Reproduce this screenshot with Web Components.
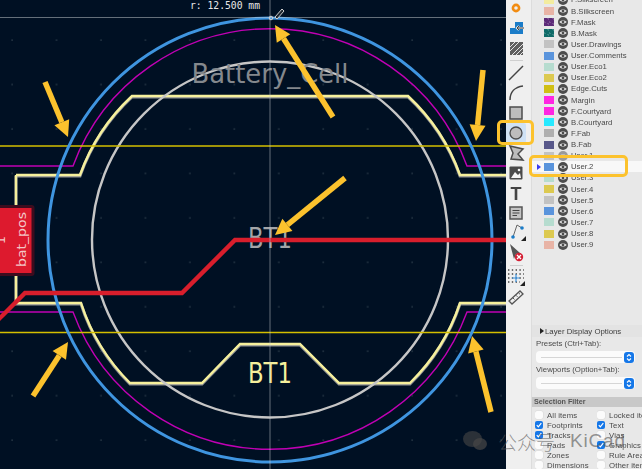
<!DOCTYPE html>
<html>
<head>
<meta charset="utf-8">
<title>KiCad footprint editor</title>
<style>
  html, body { margin: 0; padding: 0; background: #001023; }
</style>
</head>
<body>
<kicad-app>
  <pcb-canvas slot="canvas"></pcb-canvas>
  <tool-bar slot="tools"></tool-bar>
  <side-panel slot="panel"></side-panel>
  <call-arrow x1="333" y1="117" x2="275" y2="25"></call-arrow>
  <call-arrow x1="45" y1="82" x2="68" y2="137"></call-arrow>
  <call-arrow x1="483" y1="70" x2="476" y2="141"></call-arrow>
  <call-arrow x1="345" y1="178" x2="275" y2="235"></call-arrow>
  <call-arrow x1="33" y1="396" x2="68" y2="342"></call-arrow>
  <call-arrow x1="491" y1="412" x2="472" y2="336"></call-arrow>
  <call-box style="left:497px;top:120px;width:31px;height:19px"></call-box>
  <call-box style="left:529px;top:155px;width:93px;height:16px"></call-box>
  <water-mark></water-mark>
</kicad-app>

<script>
const GOLD = '#fcc22d';

class KicadApp extends HTMLElement {
  constructor() {
    super();
    this.attachShadow({ mode: 'open' });
    this.shadowRoot.innerHTML = `
      <style>
        :host {
          position: relative;
          display: grid;
          grid-template-columns: 506px 26px 110px;
          width: 642px;
          height: 469px;
          overflow: hidden;
          font-family: "Liberation Sans", Arial, sans-serif;
        }
      </style>
      <slot name="canvas"></slot>
      <slot name="tools"></slot>
      <slot name="panel"></slot>
      <slot></slot>
    `;
  }
}

class PcbCanvas extends HTMLElement {
  constructor() {
    super();
    this.attachShadow({ mode: 'open' });
    const silk = `M16 175H80A200 200 0 0 1 132 96H408A200 200 0 0 1 460 175H506
      M16 175V303H81A200 200 0 0 0 130 383H202L240 344H300L339 383H410A200 200 0 0 0 460 303H506`;
    this.shadowRoot.innerHTML = `
      <style>
        :host { display: block; width: 506px; height: 469px; background: #001023; overflow: hidden; }
        svg { display: block; }
        text { font-family: "DejaVu Sans", sans-serif; }
        .hud { font-family: "DejaVu Sans Mono", monospace; font-size: 9.7px; fill: #e8e8e8; }
      </style>
      <svg width="506" height="469" viewBox="0 0 506 469">
        <defs>
          <pattern id="grid" x="11" y="39" width="44.45" height="44.45" patternUnits="userSpaceOnUse">
            <rect x="0.5" y="0.5" width="1.2" height="1.2" fill="#3d4c58"></rect>
          </pattern>
        </defs>
        <rect width="506" height="469" fill="url(#grid)"></rect>

        <path d="${silk}" transform="translate(0 1)" fill="none" stroke="#8f9296" stroke-width="3"></path>
        <path d="${silk}" fill="none" stroke="#f6f09c" stroke-width="2.4"></path>

        <path d="M0 166H73A210 210 0 0 1 467 166H506M0 312H73A210 210 0 0 0 467 312H506"
          fill="none" stroke="#c000b4" stroke-width="1.4"></path>
        <circle cx="270" cy="239.5" r="178" fill="none" stroke="#c6c6c6" stroke-width="2.4"></circle>

        <text x="270" y="83" font-size="27" text-anchor="middle" textLength="157" lengthAdjust="spacingAndGlyphs" fill="#84888d">Battery_Cell</text>
        <text x="270" y="248" font-size="28" text-anchor="middle" textLength="44" lengthAdjust="spacingAndGlyphs" fill="#a3a5a8">BT1</text>
        <text x="270" y="383" font-size="28" text-anchor="middle" textLength="44" lengthAdjust="spacingAndGlyphs" fill="#f6f09c">BT1</text>

        <path d="M0 146H506M0 332.5H506" stroke="#d4bf00" stroke-width="1.6"></path>
        <circle cx="270" cy="240" r="222" fill="none" stroke="#3f95e0" stroke-width="3"></circle>

        <path d="M-6 324L25 293H182L235 240H506" fill="none" stroke="#d81e2c" stroke-width="4.4"></path>

        <rect x="-6" y="205" width="40.5" height="71" rx="3" fill="#3c0c1e"></rect>
        <rect x="-6" y="208" width="37.5" height="65" fill="#dd1a2e"></rect>
        <text transform="translate(26 267) rotate(-90)" font-size="12.4" fill="#f3c6c8" textLength="55" lengthAdjust="spacingAndGlyphs">bat_pos</text>
        <text transform="translate(5 244) rotate(-90)" font-size="12.4" fill="#f3c6c8">1</text>

        <path d="M270 0V469M0 17.5H506" stroke="#c8cdd2" stroke-opacity=".5" stroke-width="1"></path>
        <circle cx="271" cy="18" r="1.8" fill="none" stroke="#cfd2d6" stroke-width="1"></circle>
        <path d="M275 17L282 9L284 11L277 19Z" fill="#1d2630" stroke="#d0d0d0" stroke-width="1"></path>
        <text class="hud" x="190" y="9">r: 12.500 mm</text>
      </svg>
    `;
  }
}

const TOOL_ICONS = {
  ring: `<circle cx="10" cy="10" r="3.1" fill="none" stroke="#f28c12" stroke-width="2.6"></circle>`,
  footprint: `<path d="M4 16V10H9V4H17V16Z" fill="#1b7cc8"></path><path d="M18 10H11M13 8L11 10L13 12" stroke="#e8e8e8" stroke-width="2.2" fill="none"></path><path d="M18 10H11M13 8L11 10L13 12" stroke="#444" stroke-width="1" fill="none"></path>`,
  hatch: `<rect x="4" y="4" width="13" height="13" fill="#5f5f5f"></rect><path d="M4 9L9 4M4 13L13 4M6 17L17 6M10 17L17 10M14 17L17 14" stroke="#e4e4e4" stroke-width="1"></path>`,
  line: `<path d="M3 17L17 3" stroke="#444" stroke-width="1.5"></path>`,
  arc: `<path d="M4 17C4 9 9 4 17 3" fill="none" stroke="#444" stroke-width="1.5"></path>`,
  rect: `<rect x="4" y="4" width="12" height="12" fill="#bdbdbd" stroke="#4c4c4c" stroke-width="1.5"></rect>`,
  circle: `<circle cx="10" cy="10" r="6" fill="#bdbdbd" stroke="#4c4c4c" stroke-width="1.3"></circle>`,
  polygon: `<path d="M4 3L17 6L12 11L17 17L5 16L7 10Z" fill="#bdbdbd" stroke="#4c4c4c" stroke-width="1.5"></path>`,
  image: `<rect x="3.5" y="3.5" width="13" height="13" rx="1" fill="#4a4a4a"></rect><path d="M5 15L9 9L12 12L14 10L15 15Z" fill="#f4f4f4"></path><circle cx="13" cy="7" r="1.3" fill="#f4f4f4"></circle>`,
  text: `<text x="10" y="17" font-size="18" font-weight="bold" font-family="Liberation Sans, sans-serif" text-anchor="middle" fill="#444">T</text>`,
  textbox: `<rect x="4" y="4" width="12" height="12" fill="#c4c4c4" stroke="#555" stroke-width="1.5"></rect><path d="M6.5 7.5H13.5M6.5 10H13.5M6.5 12.5H11" stroke="#444"></path>`,
  node: `<path d="M7 14L11 2L16 5" fill="none" stroke="#666" stroke-width="1"></path><circle cx="7" cy="14" r="1.8" fill="#1b7cc8"></circle><circle cx="16" cy="5" r="1.8" fill="#1b7cc8"></circle><path d="M20 13V18H15Z" fill="#222"></path>`,
  cursor: `<path d="M4 1L14 10L10 11L8 16Z" fill="#555"></path><circle cx="13" cy="14" r="4.2" fill="#d41f34"></circle><path d="M11 12L15 16M15 12L11 16" stroke="#fff" stroke-width="1.3"></path>`,
  grid: `<path d="M2 3H18M2 7H18M2 11H18M2 15H14" stroke="#444" stroke-width="1.4" stroke-dasharray="1.4 2.4"></path><path d="M6 11H14M10 7V15" stroke="#3f95e0" stroke-width="1.2"></path><path d="M19 14V19H14Z" fill="#222"></path>`,
  ruler: `<path d="M3 14L14 4L17 7L6 17Z" fill="#f0f0f0" stroke="#555" stroke-width="1.3"></path><path d="M7 11L8.5 12.5M10 8.3L11.5 9.8M12.7 6L14 7.3" stroke="#555"></path>`
};

class ToolButton extends HTMLElement {
  constructor() {
    super();
    this.attachShadow({ mode: 'open' });
  }

  connectedCallback() {
    this.shadowRoot.innerHTML = `
      <style>
        :host { display: block; width: 20px; height: 20px; flex: none; }
        :host([active]) .face { background: #cfe2f5; border-radius: 2px; }
        .face { width: 20px; height: 20px; }
        svg { display: block; }
      </style>
      <div class="face">
        <svg width="20" height="20" viewBox="0 0 20 20">${TOOL_ICONS[this.getAttribute('icon')]}</svg>
      </div>
    `;
  }
}

class ToolBar extends HTMLElement {
  constructor() {
    super();
    this.attachShadow({ mode: 'open' });
    const btn = (name, extra = '') => `<tool-button icon="${name}" ${extra}></tool-button>`;
    this.shadowRoot.innerHTML = `
      <style>
        :host {
          display: flex;
          flex-direction: column;
          width: 26px;
          height: 469px;
          background: #efefef;
          box-sizing: border-box;
          border-right: 1px solid #dcdcdc;
          filter: blur(.35px);
          overflow: hidden;
        }
        .top { margin-top: -2px; }
        hr { flex: none; width: 13px; height: 1px; margin: 2px 0 2px 4px; border: 0; background: #cfcfcf; }
        hr.last { margin: 1.5px 0 1.5px 4px; }
      </style>
      <div class="top"></div>
      ${btn('ring')}${btn('footprint')}${btn('hatch')}
      <hr>
      ${btn('line')}${btn('arc')}${btn('rect')}${btn('circle', 'active')}${btn('polygon')}
      ${btn('image')}${btn('text')}${btn('textbox')}${btn('node')}${btn('cursor')}
      <hr class="last">
      ${btn('grid')}${btn('ruler')}
    `;
  }
}

class LayerRow extends HTMLElement {
  constructor() {
    super();
    this.attachShadow({ mode: 'open' });
  }

  connectedCallback() {
    const color = this.getAttribute('color');
    const hatch = this.hasAttribute('hatch')
      ? `background-image: linear-gradient(45deg, rgba(255,255,255,.18) 25%, transparent 25%, transparent 75%, rgba(255,255,255,.18) 75%); background-size: 5px 5px;`
      : '';
    const eye = this.hasAttribute('dim') ? '#9a9a9a' : '#4d4d4d';
    this.shadowRoot.innerHTML = `
      <style>
        :host { display: flex; align-items: center; height: 11.13px; font-size: 7.75px; color: #4a4a4a; white-space: nowrap; }
        :host([selected]) { background: #f8f8f8; }
        .arrow { width: 12px; flex: none; padding-left: 5px; box-sizing: border-box; }
        .arrow i { display: none; width: 0; height: 0; border-left: 4px solid #3b3bf0; border-top: 3.5px solid transparent; border-bottom: 3.5px solid transparent; }
        :host([selected]) .arrow i { display: block; }
        .swatch { width: 10px; height: 8px; flex: none; margin-right: 4px; background-color: ${color}; ${hatch} }
        svg { flex: none; margin-right: 3px; display: block; }
      </style>
      <span class="arrow"><i></i></span>
      <span class="swatch"></span>
      <svg width="10" height="10" viewBox="0 0 10 10">
        <circle cx="5" cy="5" r="5" fill="${eye}"></circle>
        <path d="M1.2 5Q5 1.6 8.8 5Q5 8.4 1.2 5Z" fill="#ededed"></path>
        <circle cx="5" cy="5" r="1.4" fill="${eye}"></circle>
      </svg>
      <slot></slot>
    `;
  }
}

class SelectBox extends HTMLElement {
  constructor() {
    super();
    this.attachShadow({ mode: 'open' });
    this.shadowRoot.innerHTML = `
      <style>
        :host { display: flex; flex: none; align-items: center; width: 99px; height: 12px; margin-left: 4px; border-radius: 4px; background: #fbfbfb; box-sizing: border-box; padding-left: 5px; }
        .rule { flex: 1; height: 1px; background: #d6d6d6; margin-right: 2px; }
        .step { width: 10px; height: 11px; border-radius: 3px; background: #1577e8; flex: none; margin-right: 1px; display: block; }
      </style>
      <div class="rule"></div>
      <svg class="step" viewBox="0 0 10 11"><path d="M3 4.5L5 2.5L7 4.5M3 6.5L5 8.5L7 6.5" fill="none" stroke="#fff" stroke-width="1.1"></path></svg>
    `;
  }
}

class CheckRow extends HTMLElement {
  constructor() {
    super();
    this.attachShadow({ mode: 'open' });
    this.shadowRoot.innerHTML = `
      <style>
        :host { display: flex; align-items: center; height: 10px; font-size: 7.8px; color: #4a4a4a; letter-spacing: .1px; white-space: nowrap; min-width: 0; }
        .box { width: 8px; height: 8px; flex: none; margin-right: 4px; border-radius: 2px; background: #fbfbfb; box-shadow: 0 0 0 .5px #d8d8d8; display: block; }
        :host([checked]) .box { background: #1577e8; box-shadow: none; }
        .box path { display: none; }
        :host([checked]) .box path { display: block; }
      </style>
      <svg class="box" viewBox="0 0 8 8"><path d="M1.8 4.2L3.3 5.8L6.3 2.2" fill="none" stroke="#fff" stroke-width="1.2"></path></svg>
      <slot></slot>
    `;
  }
}

class SidePanel extends HTMLElement {
  constructor() {
    super();
    this.attachShadow({ mode: 'open' });
    const layers = [
      ['F.Silkscreen', '#f3ec9f'], ['B.Silkscreen', '#e8b4a6'], ['F.Mask', '#5c2a78', 'hatch'], ['B.Mask', '#0f6b68', 'hatch'],
      ['User.Drawings', '#c2c2c2'], ['User.Comments', '#5a94dc'], ['User.Eco1', '#b6dccf'], ['User.Eco2', '#dcc950'],
      ['Edge.Cuts', '#d0bf14'], ['Margin', '#ff26e2'], ['F.Courtyard', '#ff26e2'], ['B.Courtyard', '#26e9ff'],
      ['F.Fab', '#afafaf'], ['B.Fab', '#58588a'], ['User.1', '#c2c2c2', 'dim'], ['User.2', '#5a94dc', 'selected'],
      ['User.3', '#b6dccf'], ['User.4', '#dcc950'], ['User.5', '#c2c2c2'], ['User.6', '#5a94dc'],
      ['User.7', '#b6dccf'], ['User.8', '#dcc950'], ['User.9', '#e8b4a6']
    ];
    const rows = layers.map(([name, color, flag = '']) =>
      `<layer-row color="${color}" ${flag}>${name}</layer-row>`).join('');
    const checks = [
      ['All items', ''], ['Locked items', ''], ['Footprints', 'checked'], ['Text', 'checked'],
      ['Tracks', 'checked'], ['Vias', ''], ['Pads', ''], ['Graphics', 'checked'],
      ['Zones', ''], ['Rule Areas', ''], ['Dimensions', ''], ['Other items', '']
    ].map(([name, flag]) => `<check-row ${flag}>${name}</check-row>`).join('');
    this.shadowRoot.innerHTML = `
      <style>
        :host {
          display: flex;
          flex-direction: column;
          width: 110px;
          height: 469px;
          overflow: hidden;
          background: #e8e8e8;
          filter: blur(.35px);
        }
        .layers { margin-top: -5.6px; height: 331px; flex: none; }
        .display { display: flex; align-items: center; height: 12px; padding-left: 8px; font-size: 7.8px; color: #3c3c3c; background: #e3e3e3; flex: none; }
        .display i { width: 0; height: 0; margin-right: 1px; border-left: 4px solid #222; border-top: 3px solid transparent; border-bottom: 3px solid transparent; }
        .label { font-size: 7.8px; color: #4a4a4a; height: 10px; line-height: 10px; margin: 2px 0 2px 4px; flex: none; white-space: nowrap; }
        .sub { height: 9.5px; margin-top: 8px; padding-left: 2px; line-height: 9.5px; background: #c8c8c8; font-size: 7.2px; font-weight: bold; color: #555; flex: none; }
        .filter { display: grid; grid-template-columns: 62px 48px; padding: 3.5px 0 0 3px; overflow: hidden; flex: none; }
        check-row { overflow: hidden; }
      </style>
      <div class="layers">${rows}</div>
      <div class="display"><i></i>Layer Display Options</div>
      <div class="label">Presets (Ctrl+Tab):</div>
      <select-box></select-box>
      <div class="label">Viewports (Option+Tab):</div>
      <select-box></select-box>
      <div class="sub">Selection Filter</div>
      <div class="filter">${checks}</div>
    `;
  }
}

// overlays: the annotations drawn on top of the screenshot
class CallArrow extends HTMLElement {
  constructor() {
    super();
    this.attachShadow({ mode: 'open' });
  }

  connectedCallback() {
    const [x1, y1, x2, y2] = ['x1', 'y1', 'x2', 'y2'].map(a => Number(this.getAttribute(a)));
    const len = Math.hypot(x2 - x1, y2 - y1);
    const ux = (x2 - x1) / len, uy = (y2 - y1) / len;
    const bx = x2 - ux * 16, by = y2 - uy * 16;
    const px = -uy * 8, py = ux * 8;
    this.shadowRoot.innerHTML = `
      <style>
        :host { position: absolute; left: 0; top: 0; width: 642px; height: 469px; pointer-events: none; }
        svg { display: block; }
      </style>
      <svg width="642" height="469">
        <path d="M${x1} ${y1}L${bx} ${by}" stroke="${GOLD}" stroke-width="5.5"></path>
        <path d="M${x2} ${y2}L${bx + px} ${by + py}L${bx - px} ${by - py}Z" fill="${GOLD}"></path>
      </svg>
    `;
  }
}

class CallBox extends HTMLElement {
  constructor() {
    super();
    this.attachShadow({ mode: 'open' });
    this.shadowRoot.innerHTML = `
      <style>
        :host { position: absolute; display: block; border: 3px solid ${GOLD}; border-radius: 5px; pointer-events: none; }
      </style>
    `;
  }
}

class WaterMark extends HTMLElement {
  constructor() {
    super();
    this.attachShadow({ mode: 'open' });
    this.shadowRoot.innerHTML = `
      <style>
        :host { position: absolute; left: 463px; top: 428px; display: flex; align-items: center; height: 26px; color: rgba(85,85,85,.62); pointer-events: none; white-space: nowrap; }
        svg { display: block; margin-right: 11px; flex: none; }
        .cn { font-family: "Noto Sans CJK SC", sans-serif; font-size: 19px; font-weight: 300; margin-right: 15px; }
        .en { font-family: "Liberation Sans", sans-serif; font-size: 19px; letter-spacing: .8px; }
      </style>
      <svg width="24" height="20" viewBox="0 0 24 20">
        <ellipse cx="9.5" cy="8" rx="9.5" ry="8" fill="rgba(70,70,70,.62)"></ellipse>
        <ellipse cx="17" cy="13" rx="7" ry="6" fill="rgba(70,70,70,.72)"></ellipse>
      </svg>
      <span class="cn">公众号</span><span class="en">KiCad</span>
    `;
  }
}

customElements.define('kicad-app', KicadApp);
customElements.define('pcb-canvas', PcbCanvas);
customElements.define('tool-button', ToolButton);
customElements.define('tool-bar', ToolBar);
customElements.define('layer-row', LayerRow);
customElements.define('select-box', SelectBox);
customElements.define('check-row', CheckRow);
customElements.define('side-panel', SidePanel);
customElements.define('call-arrow', CallArrow);
customElements.define('call-box', CallBox);
customElements.define('water-mark', WaterMark);
</script>
</body>
</html>
